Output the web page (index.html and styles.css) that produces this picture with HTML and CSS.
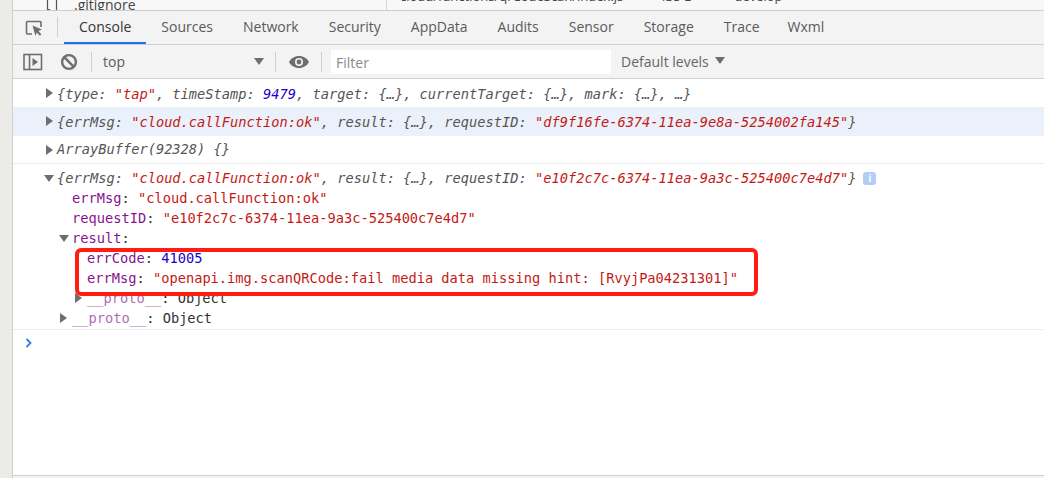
FILE: index.html
```html
<!DOCTYPE html>
<html lang="en">
<head>
<meta charset="utf-8">
<title>Console</title>
<link rel="stylesheet" href="styles.css">
</head>
<body>
<aside class="rail"></aside>
<main class="panel">
  <div class="strip">
    <div class="strip-left">
      <svg class="file-icon" width="12" height="10" viewBox="0 0 12 10"><path d="M1.500 0V9.500H4M10.500 0V10" stroke="#555" stroke-width="1.200" fill="none"/></svg>
      <span class="strip-name">.gitignore</span>
    </div>
    <div class="strip-right"><span>cloud/functions/qrCodeScan/index.js</span><span class="strip-size">435 B</span><span class="strip-branch">develop</span></div>
  </div>
  <nav class="tabs">
    <button class="inspect" aria-label="Inspect">
      <svg width="18" height="18" viewBox="0 0 18 18"><path d="M7 15H2.500a1 1 0 0 1-1-1V3.500a1 1 0 0 1 1-1H15a1 1 0 0 1 1 1V8" fill="none" stroke="#6e6e6e" stroke-width="1.600"/><path d="M7.500 6.500L17 10.500l-3.600 1.500 3 3.200-1.600 1.500-3-3.200L10.500 17z" fill="#6e6e6e"/></svg>
    </button>
    <span class="tab-sep"></span>
    <a class="tab active">Console</a>
    <a class="tab">Sources</a>
    <a class="tab">Network</a>
    <a class="tab">Security</a>
    <a class="tab">AppData</a>
    <a class="tab">Audits</a>
    <a class="tab">Sensor</a>
    <a class="tab">Storage</a>
    <a class="tab">Trace</a>
    <a class="tab last">Wxml</a>
  </nav>
  <div class="toolbar">
    <svg class="tool-sidebar" width="20" height="18" viewBox="0 0 20 18"><rect x="1" y="1.500" width="17.500" height="15" fill="none" stroke="#6e6e6e" stroke-width="1.600"/><path d="M6.500 2v14" stroke="#6e6e6e" stroke-width="1.600"/><path d="M9.500 5l5.500 4-5.500 4z" fill="#6e6e6e"/></svg>
    <svg class="tool-clear" width="18" height="18" viewBox="0 0 18 18"><circle cx="9" cy="9" r="6.900" fill="none" stroke="#6e6e6e" stroke-width="2.400"/><path d="M4.200 4.200l9.600 9.600" stroke="#6e6e6e" stroke-width="2.400"/></svg>
    <span class="tool-sep"></span>
    <div class="context"><span>top</span><i class="caret"></i></div>
    <span class="tool-sep"></span>
    <svg class="tool-eye" width="22" height="14" viewBox="0 0 22 14"><path d="M11 1C6.400 1 2.800 3.500 1 7c1.800 3.500 5.400 6 10 6s8.200-2.500 10-6c-1.800-3.500-5.400-6-10-6z" fill="#6e6e6e"/><circle cx="11" cy="7" r="4" fill="#f3f3f3"/><circle cx="11" cy="7" r="2.400" fill="#6e6e6e"/></svg>
    <span class="tool-sep"></span>
    <div class="filter">Filter</div>
    <div class="levels"><span>Default levels</span><i class="caret small"></i></div>
  </div>
  <section class="console">
    <div class="msg first"><i class="arrow right"></i><span class="it">{type: <b class="str">"tap"</b>, timeStamp: <b class="num">9479</b>, target: {…}, currentTarget: {…}, mark: {…}, …}</span></div>
    <div class="msg hl"><i class="arrow right"></i><span class="it">{errMsg: <b class="str">"cloud.callFunction:ok"</b>, result: {…}, requestID: <b class="str">"df9f16fe-6374-11ea-9e8a-5254002fa145"</b>}</span></div>
    <div class="msg third"><i class="arrow right"></i><span class="it">ArrayBuffer(92328) {}</span></div>
    <div class="tree">
      <div class="line"><i class="arrow down"></i><span class="it">{errMsg: <b class="str">"cloud.callFunction:ok"</b>, result: {…}, requestID: <b class="str">"e10f2c7c-6374-11ea-9a3c-525400c7e4d7"</b>}</span><span class="info">i</span></div>
      <div class="line d1"><span class="key">errMsg</span>: <b class="str">"cloud.callFunction:ok"</b></div>
      <div class="line d1"><span class="key">requestID</span>: <b class="str">"e10f2c7c-6374-11ea-9a3c-525400c7e4d7"</b></div>
      <div class="line d1"><i class="arrow down"></i><span class="key">result</span>:</div>
      <div class="line d2"><span class="key">errCode</span>: <b class="num">41005</b></div>
      <div class="line d2"><span class="key">errMsg</span>: <b class="str">"openapi.img.scanQRCode:fail media data missing hint: [RvyjPa04231301]"</b></div>
      <div class="line d2"><i class="arrow right"></i><span class="proto">__proto__</span>: Object</div>
      <div class="line d1"><i class="arrow right"></i><span class="proto">__proto__</span>: Object</div>
    </div>
    <div class="prompt"><svg width="8" height="10" viewBox="0 0 8 10"><path d="M1.500 1l4 4-4 4" fill="none" stroke="#2f7fe8" stroke-width="1.800"/></svg></div>
    <div class="highlight-box"></div>
  </section>
  <div class="footer"></div>
</main>
</body>
</html>
```

FILE: styles.css
```css
* { box-sizing: border-box; }
html, body { margin: 0; height: 100%; overflow: hidden; }
body { display: flex; width: 1044px; height: 478px; background: #fff; font-family: "Open Sans", "Noto Sans", sans-serif; color: #5a5a5a; }
.rail { width: 12px; flex: none; background: #ecebe7; }
.panel { flex: 1; display: flex; flex-direction: column; border-left: 1px solid #cfcfcf; min-width: 0; }

.strip { height: 11px; flex: none; display: flex; border-bottom: 1px solid #cfcfcf; overflow: hidden; font-size: 14px; line-height: 14px; color: #444; background: #f8f8f8; }
.strip-left { width: 374px; border-right: 1px solid #d6d6d6; display: flex; align-items: flex-end; padding-left: 33px; }
.file-icon { flex: none; }
.strip-name { margin-left: 16px; margin-bottom: -2px; }
.strip-right { flex: 1; display: flex; align-items: flex-start; padding-left: 13px; font-size: 13px; line-height: 14px; }
.strip-right span { margin-top: -11px; }
.strip-right .strip-size { margin-left: 35px; }
.strip-right .strip-branch { margin-left: 42px; }

.tabs { height: 34px; flex: none; display: flex; align-items: stretch; background: #f3f3f3; border-bottom: 1px solid #cfcfcf; }
.inspect { width: 40px; padding: 0 0 0 12px; margin: 0; border: 0; background: none; display: flex; align-items: center; }
.tab-sep { width: 1px; height: 20px; margin: 6px 6px 0 4px; background: #cfcfcf; }
.tab { padding: 0 15px; font-size: 14px; line-height: 32px; color: #5a5a5a; white-space: nowrap; }
.tab.last { padding-left: 13px; }
.tab.active { color: #333; border-bottom: 2px solid #1a73e8; height: 33px; }

.toolbar { height: 34px; flex: none; display: flex; align-items: center; background: #f3f3f3; border-bottom: 1px solid #cfcfcf; font-size: 14px; }
.tool-sidebar { margin-left: 10px; }
.tool-clear { margin: 0 13px 0 17px; }
.tool-sep { width: 1px; height: 20px; background: #cfcfcf; flex: none; }
.context { width: 183px; display: flex; align-items: center; justify-content: space-between; padding: 0 11px; color: #5a5a5a; }
.caret { display: block; width: 0; height: 0; border-left: 5px solid transparent; border-right: 5px solid transparent; border-top: 7px solid #6e6e6e; }
.caret.small { margin-left: 6px; margin-top: -2px; }
.tool-eye { margin: 0 11px 0 12px; flex: none; }
.filter { width: 280px; height: 24px; margin-left: 9px; background: #fff; color: #8a8a8a; line-height: 25px; padding-left: 5px; }
.levels { display: flex; align-items: center; margin-left: 10px; color: #666; }

.console { position: relative; flex: 1; font-family: "DejaVu Sans Mono", "Liberation Mono", monospace; font-size: 13.7px; color: #333; min-height: 0; }
.console b { font-weight: normal; }
.it { font-style: italic; color: #555; }
.str { color: #c41a16; }
.num { color: #1c00cf; }
.key { color: #881391; }
.proto { color: #ad6fb3; }
.msg { position: relative; padding-left: 44px; white-space: pre; }
.msg.first { height: 28px; line-height: 30px; }
.msg.hl { height: 29px; line-height: 31px; background: #ebf1fb; }
.msg.third { height: 28px; line-height: 27px; border-bottom: 1px solid #ececec; }
.tree { border-bottom: 1px solid #ececec; padding-top: 4px; height: 166px; }
.line { position: relative; height: 20px; line-height: 20px; padding-left: 44px; white-space: pre; }
.line.d1 { padding-left: 59px; }
.line.d2 { padding-left: 74px; }
.arrow { display: inline-block; width: 0; height: 0; position: absolute; }
.arrow.right { border-top: 5px solid transparent; border-bottom: 5px solid transparent; border-left: 7px solid #6e6e6e; top: 5px; margin-left: -11px; }
.arrow.down { border-left: 5px solid transparent; border-right: 5px solid transparent; border-top: 7px solid #6e6e6e; top: 7px; margin-left: -13px; }
.msg .arrow.right { top: 9px; margin-left: -11px; }
.line .arrow.right { margin-left: -12px; }
.info { display: inline-block; width: 13px; height: 13px; margin-left: 7px; border-radius: 3px; background: #b4cdf7; color: #fff; font: bold 10px/13px "Liberation Sans", sans-serif; text-align: center; vertical-align: 1px; }
.prompt { height: 26px; padding: 8px 0 0 12px; line-height: 10px; }
.highlight-box { position: absolute; left: 62px; top: 169px; width: 683px; height: 48px; border: 4px solid #ff1d12; border-radius: 6px; pointer-events: none; }
.footer { height: 3px; flex: none; background: #f3f3f3; border-top: 1px solid #cfcfcf; }
```
